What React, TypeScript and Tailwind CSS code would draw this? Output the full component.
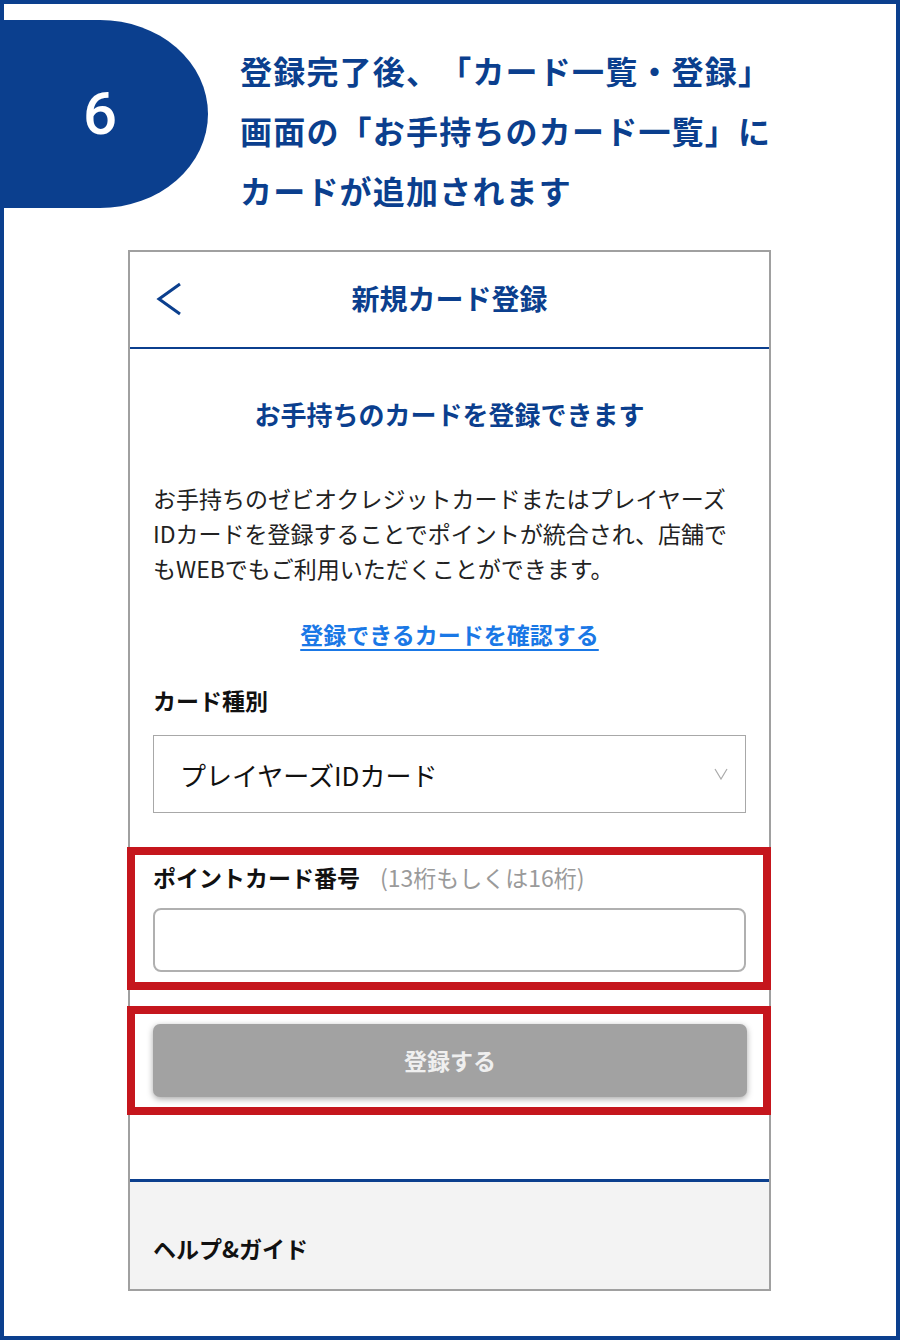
import React from "react";

const NAVY = "text-[#0b3f8e]";

export default function App() {
  return (
    <div
      className="w-[900px] h-[1340px] border-4 border-[#0b3f8e] bg-white box-border overflow-hidden"
      style={{ fontFamily: '"Noto Sans CJK JP", "Noto Sans", sans-serif' }}
    >
      {/* top heading row */}
      <div className="flex items-start">
        <div className="mt-[16px] w-[204px] h-[188px] bg-[#0b3f8e] rounded-tr-[108px_94px] rounded-br-[108px_94px] flex items-center justify-center pr-[12px]">
          <span
            className="text-white text-[60px] leading-none font-medium"
            style={{ fontFamily: "Roboto, 'Liberation Sans', sans-serif" }}
          >
            6
          </span>
        </div>
        <div className={`mt-[36px] ml-[32px] ${NAVY} text-[32px] leading-[60px] font-bold tracking-[1.2px] [text-spacing-trim:space-all]`}>
          <div>登録完了後、「カード一覧・登録」</div>
          <div>画面の「お手持ちのカード一覧」に</div>
          <div>カードが追加されます</div>
        </div>
      </div>

      {/* phone frame */}
      <div className="mt-[30px] ml-[124px] w-[643px] border-2 border-[#a0a0a0] flex flex-col">
        {/* header */}
        <div className="h-[97px] pb-[3px] border-b-2 border-[#0b3f8e] grid grid-cols-[80px_1fr_80px] items-center">
          <div className="pl-[26px] pt-[1px] flex items-center">
            <svg width="26" height="34" viewBox="0 0 26 34" fill="none">
              <polyline
                points="24,2 3,17 24,32"
                stroke="#0b3f8e"
                strokeWidth="3"
                strokeLinecap="butt"
                strokeLinejoin="miter"
              />
            </svg>
          </div>
          <div className={`text-center ${NAVY} text-[28px] font-bold leading-[40px]`}>新規カード登録</div>
          <div />
        </div>

        {/* body */}
        <div className="px-[23px] flex flex-col">
          <div className={`pt-[45px] text-center ${NAVY} text-[26px] font-bold leading-[40px]`}>
            お手持ちのカードを登録できます
          </div>
          <p className="mt-[47px] text-[23px] leading-[35px] text-[#222]">
            お手持ちのゼビオクレジットカードまたはプレイヤーズ
            <br />
            IDカードを登録することでポイントが統合され、店舗で
            <br />
            もWEBでもご利用いただくことができます。
          </p>
          <div className="mt-[31px] text-center leading-[35px]">
            <a className="text-[23px] font-bold text-[#1a78e6] underline underline-offset-[5px] decoration-[1.5px]">
              登録できるカードを確認する
            </a>
          </div>
          <div className="mt-[28px] text-[23px] font-bold leading-[35px] text-[#111]">カード種別</div>
          <div className="mt-[17px] h-[78px] border border-[#a8a8a8] flex items-center justify-between pl-[26px] pr-[17px]">
            <span className="text-[26px] text-[#111]">プレイヤーズIDカード</span>
            <svg width="14" height="12" viewBox="0 0 14 12" fill="none">
              <polyline points="1,1 7,11 13,1" stroke="#aaaaaa" strokeWidth="1.2" />
            </svg>
          </div>

          {/* red box 1 */}
          <div className="mt-[34px] -ml-[26px] -mr-[25px] border-[8px] border-[#c5161d] pl-[18px] pr-[17px] pt-[7px] pb-[10px]">
            <div className="flex items-baseline leading-[30px]">
              <span className="text-[23px] font-bold text-[#111]">ポイントカード番号</span>
              <span className="ml-[20px] text-[23px] text-[#9a9a9a]">(13桁もしくは16桁)</span>
            </div>
            <div className="mt-[16px] h-[64px] rounded-[8px] border-2 border-[#b0b0b0] bg-white" />
          </div>

          {/* red box 2 */}
          <div className="mt-[16px] -ml-[26px] -mr-[25px] border-[8px] border-[#c5161d] pl-[18px] pr-[16px] pt-[10px] pb-[10px]">
            <div className="h-[73px] rounded-[7px] bg-[#a2a2a2] shadow-[0_2px_6px_rgba(0,0,0,0.35)] flex items-center justify-center">
              <span className="text-[23px] font-bold text-[#efefef]">登録する</span>
            </div>
          </div>

          <div className="h-[64px]" />
        </div>

        {/* footer */}
        <div className="border-t-[3px] border-[#0b3f8e] bg-[#f3f3f3] pt-[51px] pb-[26px] px-[23px]">
          <div className="text-[23px] font-bold leading-[30px] text-[#111]">ヘルプ&amp;ガイド</div>
        </div>
      </div>
    </div>
  );
}
